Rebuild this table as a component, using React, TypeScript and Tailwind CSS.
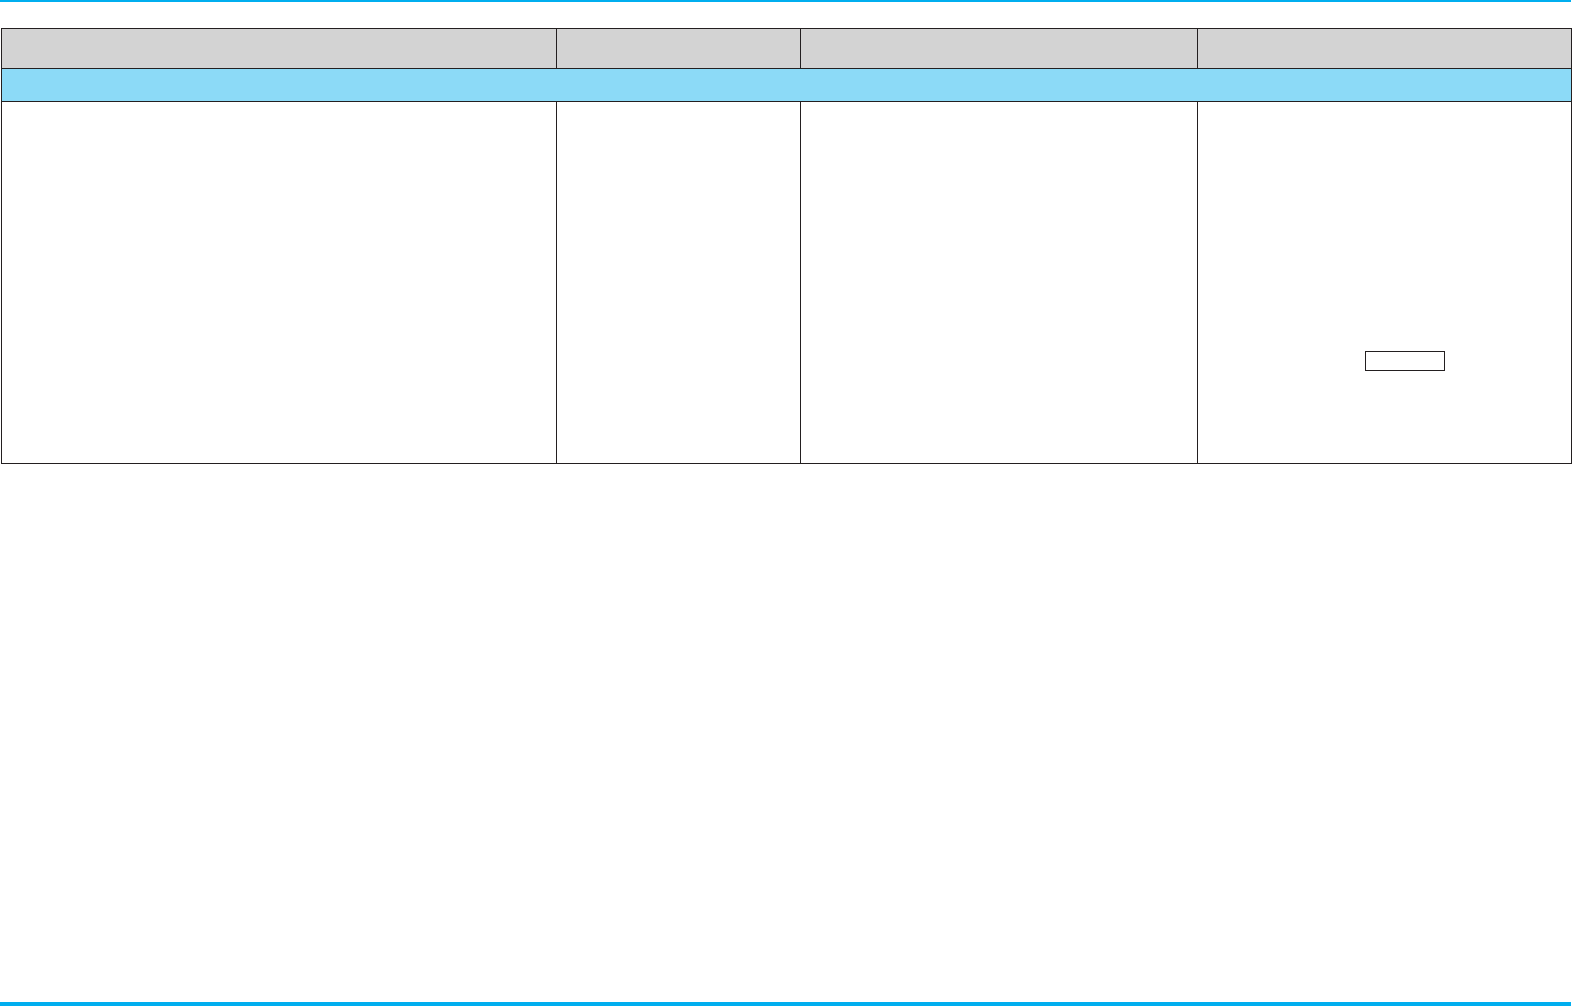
import React from "react";

export default function App() {
  return (
    <div className="flex h-[1006px] w-[1572px] flex-col bg-white" style={{ fontFamily: '"Liberation Sans", Arial, sans-serif' }}>
      <div className="h-[2px] w-[1571px] bg-[#00aeef]" />
      <div className="ml-[1px] mt-[26px] w-[1571px] border border-[#231f20]">
        <div className="flex h-[40px] border-b border-[#231f20] bg-[#d3d3d3]">
          <div className="w-[555px] border-r border-[#231f20]" />
          <div className="w-[244px] border-r border-[#231f20]" />
          <div className="w-[397px] border-r border-[#231f20]" />
          <div className="flex-1" />
        </div>
        <div className="h-[33px] border-b border-[#231f20] bg-[#8cdaf7]" />
        <div className="flex h-[361px]">
          <div className="w-[555px] border-r border-[#231f20]" />
          <div className="w-[244px] border-r border-[#231f20]" />
          <div className="w-[397px] border-r border-[#231f20]" />
          <div className="flex-1 pl-[167px] pt-[249px]">
            <div className="h-[20px] w-[80px] border border-[#231f20]" />
          </div>
        </div>
      </div>
      <div className="mt-auto h-[4px] w-[1571px] bg-[#00aeef]" />
    </div>
  );
}
